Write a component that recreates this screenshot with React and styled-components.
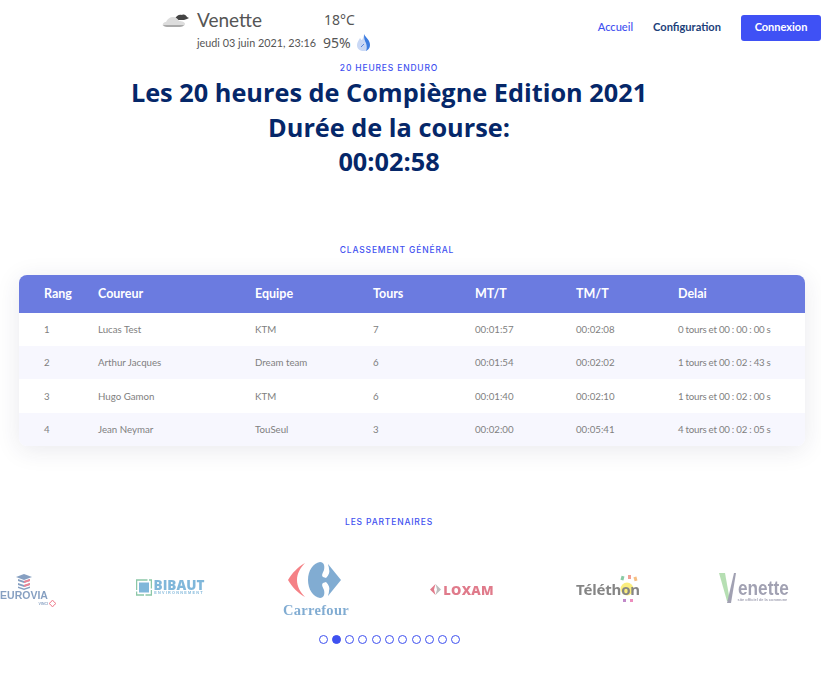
import React from 'react';
import styled, { createGlobalStyle } from 'styled-components';

const Global = createGlobalStyle`
  html, body { margin: 0; padding: 0; background: #fff; }
  body { font-family: "Lato", "Liberation Sans", sans-serif; overflow: hidden; }
  #root { width: 821px; height: 687px; overflow: hidden; }
`;
const Page = styled.div`width: 821px; height: 687px; display: flex; flex-direction: column; overflow: hidden;`;
const Header = styled.header`display: flex; justify-content: space-between; align-items: flex-start; height: 60px; flex: none;`;
const Weather = styled.div`margin: 9px 0 0 162px; width: 215px; display: flex; flex-direction: column;`;
const WeatherRow = styled.div`display: flex; align-items: center;`;
const City = styled.div`font: 400 19px/22px "Lato", sans-serif; color: #555; margin-left: 7px; width: 127px;`;
const Temp = styled.div`font: 400 14px/22px "Noto Sans", sans-serif; color: #555;`;
const DateText = styled.div`font: 400 10.8px/20px "Lato", sans-serif; color: #555; margin-left: 35px; width: 126px; white-space: nowrap;`;
const Humidity = styled.div`font: 400 14px/20px "Noto Sans", sans-serif; color: #555; margin: 0 5px 0 0;`;
const WeatherBottom = styled(WeatherRow)`margin-top: 2px;`;
const Nav = styled.nav`display: flex; align-items: center; margin: 15px 0 0; gap: 20px;`;
const NavLink = styled.a`color: ${p => p.$active ? '#3f51f0' : '#1d3f7a'}; font: ${p => p.$active ? 500 : 700} 11.1px/16px "Lato", sans-serif; padding-bottom: 2px;`;
const Login = styled.button`width: 80px; height: 26px; border: 0; border-radius: 3px; background: #3f51f5; color: #fff; font: 700 11px/24px "Lato", sans-serif; padding: 0 0 2px;`;
const Eyebrow = styled.div`font: 500 8.5px/12px "Inter", "Noto Sans", sans-serif; letter-spacing: .82px; color: #3f51f0; text-align: center; text-transform: uppercase; width: ${p => p.$w}px; margin-top: ${p => p.$mt}px; flex: none;`;
const Title = styled.h1`margin: 1px 0 0; width: 778px; text-align: center; color: #052769; font: 700 25.3px/34.5px "Open Sans", sans-serif; flex: none;`;
const Card = styled.div`margin: 19px 0 0 19px; width: 786px; flex: none; border-radius: 8px; box-shadow: 0 4px 24px rgba(40,40,80,.1); overflow: hidden;`;
const Row = styled.div`display: grid; grid-template-columns: 79px 157px 118px 102px 101px 102px 1fr; align-items: center; box-sizing: border-box; padding-top: ${p => p.$head ? 1 : 0}px; height: ${p => p.$h}px; background: ${p => p.$head ? '#6b7be0' : p.$alt ? '#f7f7fe' : '#fff'}; color: ${p => p.$head ? '#fff' : '#808080'}; font: ${p => p.$head ? '700 12.5px' : '400 9.7px'}/14px "Lato", sans-serif;`;
const Cell = styled.div`white-space: nowrap; &:first-child { padding-left: 25px; }`;
const DelayCell = styled(Cell)`letter-spacing: -.25px;`;
const Track = styled.div`display: flex; margin: 24px 0 0 -49px; flex: none; height: 70px;`;
const Slot = styled.div`width: 146px; height: 70px; box-sizing: border-box; padding-top: ${p => p.$pt}px; flex: none; display: flex; align-items: center; justify-content: center; opacity: .55; filter: blur(.45px);`;
const Brand = styled.div`display: flex; flex-direction: column; align-items: center;`;
const BrandRow = styled.div`display: flex; align-items: center; gap: 2px;`;
const EuroviaName = styled.span`font: 700 10.5px/10px "Liberation Sans", sans-serif; color: #24528f;`;
const EuroviaFoot = styled.span`display: flex; align-items: center; gap: 1px; font: 700 3.5px/6px "Liberation Sans", sans-serif; color: #24528f; align-self: flex-end; margin-right: -8px;`;
const BibautName = styled.span`font: 800 13.5px/11px "Open Sans", sans-serif; color: #1a7dbc; display: block;`;
const BibautSub = styled.span`font: 600 3.8px/5px "Liberation Sans", sans-serif; color: #1a7dbc; letter-spacing: 1.25px; display: block;`;
const CarrefourName = styled.span`font: 700 14.5px/16px "Liberation Serif", serif; color: #1c69ae; letter-spacing: .3px; margin-top: 4px;`;
const LoxamName = styled.span`font: 800 13px/14px "Open Sans", sans-serif; color: #c8102e; letter-spacing: .2px;`;
const TelethonName = styled.span`font: 700 15px/18px "Noto Sans", sans-serif; color: #222; letter-spacing: -.2px; position: relative; isolation: isolate;`;
const VenetteText = styled(Brand)`align-items: flex-start; margin-top: 3px;`;
const VenetteName = styled.span`font: 700 21px/19px "Liberation Sans", sans-serif; color: #555575; transform: scaleX(.82); transform-origin: left; display: block; width: 52px; white-space: nowrap;`;
const VenetteSub = styled.span`font: 700 3.9px/5px "Liberation Sans", sans-serif; color: #555575; display: block; white-space: nowrap;`;
const Dots = styled.div`display: flex; gap: 4.3px; margin: 13px 0 0 318.5px; flex: none;`;
const Dot = styled.span`width: 9px; height: 9px; box-sizing: border-box; border-radius: 50%; border: 1px solid #3f51f0; background: ${p => p.$on ? '#3f51f0' : 'transparent'};`;
const SunDeco = styled.svg`position: absolute; left: 39px; top: -5px; z-index: -1;`;

const rows = [
  ['1','Lucas Test','KTM','7','00:01:57','00:02:08','0 tours et 00 : 00 : 00 s'],
  ['2','Arthur Jacques','Dream team','6','00:01:54','00:02:02','1 tours et 00 : 02 : 43 s'],
  ['3','Hugo Gamon','KTM','6','00:01:40','00:02:10','1 tours et 00 : 02 : 00 s'],
  ['4','Jean Neymar','TouSeul','3','00:02:00','00:05:41','4 tours et 00 : 02 : 05 s'],
];
const heights = [33, 33, 34, 33];

const Cloud = () => (
  <svg width="28" height="16" viewBox="0 0 28 16" style={{ filter: 'blur(.4px)' }}>
    <path d="M13 7c1-3 4-5 7-4 2-1 4 0 5 2l2 1-2 1-3 1-6 0z" fill="#444" />
    <path d="M1 14c-1-2 1-4 3-4 1-3 4-5 7-5 3 0 5 2 6 4 3 0 6 1 6 3 0 1-1 2-3 2 -6 1-14 1-19 0z" fill="#ddd" />
    <path d="M1 13h21c-1 2-4 2-6 2H5c-2 0-3-1-4-2z" fill="#aaa" />
  </svg>
);
const Drop = () => (
  <svg width="15" height="18" viewBox="0 0 15 18">
    <path d="M8 0c1 3 6 6 6 11 0 4-3 6-6 6-4 0-7-2-7-6 0-3 2-5 3-7 1 1 1 2 2 2 1-2 2-4 2-6z" fill="#c9d8f5" />
    <path d="M8 0c1 3 6 6 6 11 0 3-2 5-4 6 1-2 1-5 0-8-1-2-2-4-2-9z" fill="#3a7be0" />
    <path d="M5 13l3-3M5 10h.1M8 13h.1" stroke="#3a6fd8" strokeWidth=".8" fill="none" />
  </svg>
);
const EuroviaMark = () => (
  <svg width="16" height="16" viewBox="0 0 16 16">
    <path d="M0 3l8-3 8 3-8 3z" fill="#24528f" />
    <path d="M2 5l6 2 6-2v2l-6 2-6-2z" fill="#24528f" />
    <path d="M8 7l6-2v2l-6 2z" fill="#e3233f" />
    <path d="M2 9l6 2 6-2v2l-6 2-6-2z" fill="#24528f" />
    <path d="M8 11l6-2v2l-6 2z" fill="#e3233f" />
    <path d="M2 12.5l6 2 6-2v1.5l-6 2-6-2z" fill="#24528f" />
  </svg>
);
const EuroviaStar = () => (
  <svg width="7" height="7" viewBox="0 0 7 7">
    <path d="M3.5 0 5 2 7 3.5 5 5 3.5 7 2 5 0 3.5 2 2z" fill="none" stroke="#e3233f" strokeWidth="1" />
  </svg>
);
const BibautMark = () => (
  <svg width="16" height="17" viewBox="0 0 16 17">
    <rect x=".5" y="1" width="15" height="15" fill="none" stroke="#2f9a62" strokeWidth="1.5" strokeDasharray="11 1.5" />
    <rect x="3" y="3.5" width="10" height="10" fill="#1a7dbc" />
  </svg>
);
const CarrefourMark = () => (
  <svg width="55" height="36" viewBox="0 0 55 36">
    <path d="M17 1C10 5 4 11 0 18c4 7 10 13 17 17-5-5-8-11-8-17 0-6 3-12 8-17z" fill="#ed1c24" />
    <path d="M32 0C25 1 20 9 20 18C20 27 25 35 32 36C36 36 37 32 36 28C35 25 33 23 35 21L38 20C41 23 42 26 41 29C41 31 40 33 40 34L53 18L40 2C40 3 41 5 41 7C42 10 41 13 38 16L35 15C33 13 35 11 36 8C37 4 36 0 32 0Z" fill="#1c69ae" />
  </svg>
);
const LoxamMark = () => (
  <svg width="11" height="11" viewBox="0 0 11 11">
    <path d="M5.5 0 0 5.5 5.5 11 4 5.5z" fill="#c8102e" />
    <path d="M5.5 0 11 5.5 5.5 11 7 5.5z" fill="#888" />
  </svg>
);
const TelethonDeco = () => (
  <SunDeco width="24" height="28" viewBox="0 0 24 28">
    <circle cx="12" cy="14" r="6.5" fill="#f7e017" />
    <rect x="6" y="1" width="3" height="4" fill="#2aa05a" transform="rotate(15 7 3)" />
    <rect x="13" y="0" width="3" height="4" fill="#e84f3d" />
    <rect x="19" y="2" width="3" height="4" fill="#f08a1d" transform="rotate(-15 20 4)" />
    <rect x="8" y="24" width="3" height="3" fill="#8e2a9e" />
    <rect x="15" y="24" width="3" height="3" fill="#e0338a" />
  </SunDeco>
);
const VenetteMark = () => (
  <svg width="17" height="31" viewBox="0 0 17 31">
    <path d="M0 0h6l5 28H8z" fill="#7cc576" />
    <path d="M8 30 15 0h2l-5 30z" fill="#555575" />
  </svg>
);

export default function App() {
  return (
    <Page>
      <Global />
      <Header>
        <Weather>
          <WeatherRow>
            <Cloud />
            <City>Venette</City>
            <Temp>18°C</Temp>
          </WeatherRow>
          <WeatherBottom>
            <DateText>jeudi 03 juin 2021, 23:16</DateText>
            <Humidity>95%</Humidity>
            <Drop />
          </WeatherBottom>
        </Weather>
        <Nav>
          <NavLink $active>Accueil</NavLink>
          <NavLink>Configuration</NavLink>
          <Login>Connexion</Login>
        </Nav>
      </Header>
      <Eyebrow $w={778} $mt={2}>20 heures enduro</Eyebrow>
      <Title>Les 20 heures de Compiègne Edition 2021<br />Durée de la course:<br />00:02:58</Title>
      <Eyebrow $w={794} $mt={65}>Classement général</Eyebrow>
      <Card>
        <Row $head $h={38}>
          {['Rang','Coureur','Equipe','Tours','MT/T','TM/T','Delai'].map(h => <Cell key={h}>{h}</Cell>)}
        </Row>
        {rows.map((r, i) => (
          <Row key={r[0]} $alt={i % 2 === 1} $h={heights[i]}>
            {r.slice(0, 6).map((c, j) => <Cell key={j}>{c}</Cell>)}
            <DelayCell>{r[6]}</DelayCell>
          </Row>
        ))}
      </Card>
      <Eyebrow $w={778} $mt={70}>Les partenaires</Eyebrow>
      <Track>
        <Slot $pt={8}>
          <Brand>
            <EuroviaMark />
            <EuroviaName>EUROVIA</EuroviaName>
            <EuroviaFoot>VINCI <EuroviaStar /></EuroviaFoot>
          </Brand>
        </Slot>
        <Slot $pt={2}>
          <BrandRow>
            <BibautMark />
            <Brand>
              <BibautName>BIBAUT</BibautName>
              <BibautSub>ENVIRONNEMENT</BibautSub>
            </Brand>
          </BrandRow>
        </Slot>
        <Slot $pt={6}>
          <Brand>
            <CarrefourMark />
            <CarrefourName>Carrefour</CarrefourName>
          </Brand>
        </Slot>
        <Slot $pt={6}>
          <BrandRow>
            <LoxamMark />
            <LoxamName>LOXAM</LoxamName>
          </BrandRow>
        </Slot>
        <Slot $pt={4}>
          <TelethonName>Téléth<TelethonDeco />on</TelethonName>
        </Slot>
        <Slot $pt={4}>
          <BrandRow>
            <VenetteMark />
            <VenetteText>
              <VenetteName>enette</VenetteName>
              <VenetteSub>site officiel de la commune</VenetteSub>
            </VenetteText>
          </BrandRow>
        </Slot>
      </Track>
      <Dots>
        {Array.from({ length: 11 }, (_, i) => <Dot key={i} $on={i === 1} />)}
      </Dots>
    </Page>
  );
}
